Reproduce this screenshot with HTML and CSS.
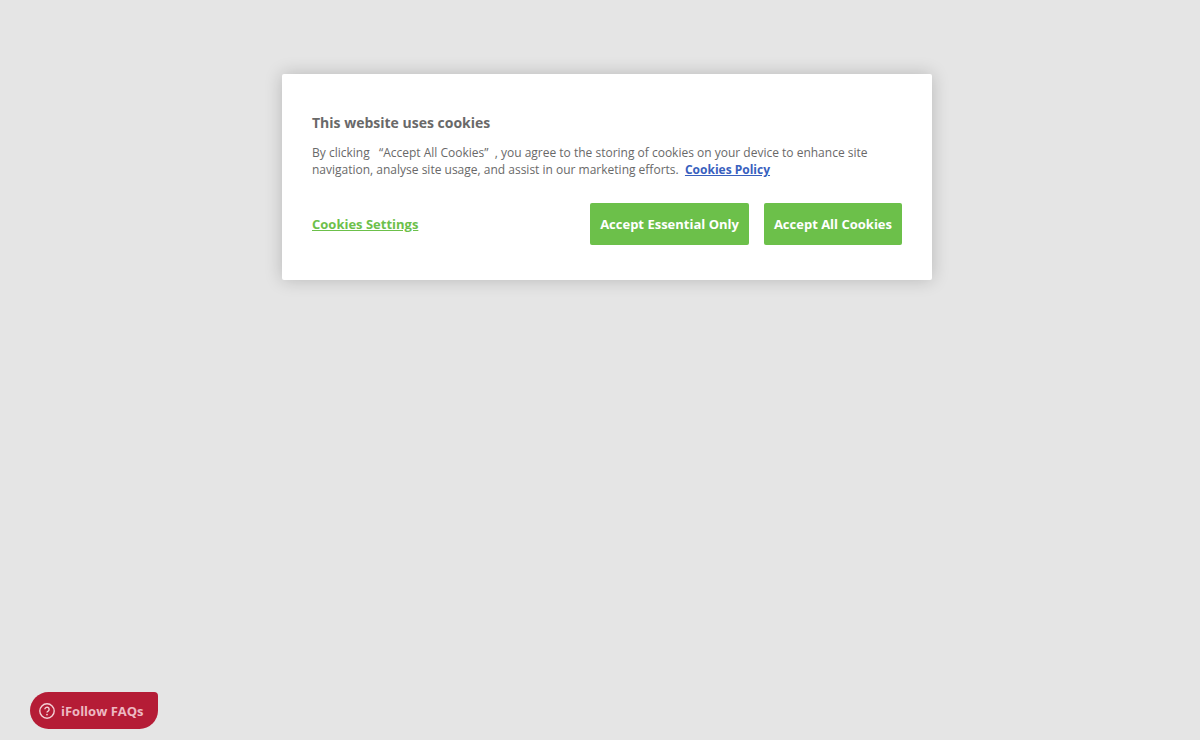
FILE: index.html
```html
<!DOCTYPE html>
<html lang="en">

<head>

<meta charset="utf-8">
<meta name="viewport" content="width=device-width, initial-scale=1">
<title>Cookies</title>

<link rel="stylesheet" href="styles.css">

</head>

<body>

<main class="page">

<section class="banner" role="dialog" aria-labelledby="banner-title">

<h2 class="banner-title" id="banner-title">This website uses cookies</h2>

<p class="banner-text">By clicking &nbsp; “Accept All Cookies” &nbsp;, you agree to the storing of
cookies on your device to enhance site navigation, analyse site usage, and assist in our
marketing efforts. &nbsp;<a class="policy" href="#policy">Cookies Policy</a></p>

<div class="banner-actions">
  <button type="button" class="settings">Cookies Settings</button>
  <button type="button" class="accept">Accept Essential Only</button>
  <button type="button" class="accept">Accept All Cookies</button>
</div>

</section>

</main>

<button type="button" class="launcher">
  <svg class="launcher-icon" viewBox="0 0 16 16" aria-hidden="true">
    <circle cx="8" cy="8" r="7.2" />
    <path d="M5.9 6.3a2.1 2.1 0 1 1 3.2 1.8C8.4 8.5 8 8.8 8 9.6" />
    <circle class="dot" cx="8" cy="11.6" r="0.9" />
  </svg>
  <span>iFollow FAQs</span>
</button>

</body>

</html>
```

FILE: styles.css
```css
body {
   margin: 0;
   background: #e5e5e5;
   color: #696969;
   font-family: "Open Sans", "Noto Sans", sans-serif;
   font-size: 12px; }

.page {
   box-sizing: border-box;
   min-height: 100vh;
   padding: 74px 0 0 14px; }

.banner {
   box-sizing: border-box;
   max-width: 650px;
   margin: 0 auto;
   padding: 39px 30px 35px;
   border-radius: 2px;
   background: #fff;
   box-shadow: 0 0 18px rgba(0, 0, 0, 0.2); }

.banner-title {
   margin: 0;
   font-size: 14px;
   font-weight: 700;
   line-height: 20px; }

.banner-text {
   margin: 11px 0 25px;
   line-height: 17px; }

.policy {
   color: #3860be;
   font-weight: 700; }

.banner-actions {
   display: flex;
   flex-wrap: wrap;
   align-items: center;
   gap: 15px; }

.banner-actions button {
   border: 0;
   font: inherit;
   font-size: 13px;
   font-weight: 700;
   cursor: pointer; }

.banner-actions .settings {
   margin-right: auto;
   padding: 0;
   background: none;
   color: #6cc04a;
   text-decoration: underline; }

.banner-actions .accept {
   height: 42px;
   padding: 0 10px;
   border-radius: 2px;
   background: #6cc04a;
   color: #fff; }

.launcher {
   position: fixed;
   left: 30px;
   bottom: 11px;
   display: flex;
   align-items: center;
   gap: 6px;
   height: 37px;
   padding: 0 14px 0 9px;
   border: 0;
   border-radius: 19px 4px 19px 19px;
   background: #b51c36;
   color: #edb9c2;
   font: inherit;
   font-size: 13px;
   font-weight: 700;
   cursor: pointer; }

.launcher-icon {
   width: 16px;
   height: 16px;
   fill: none;
   stroke: #f3d0d6;
   stroke-width: 1.4; }

.launcher-icon .dot {
   fill: #f3d0d6;
   stroke: none; }
```
